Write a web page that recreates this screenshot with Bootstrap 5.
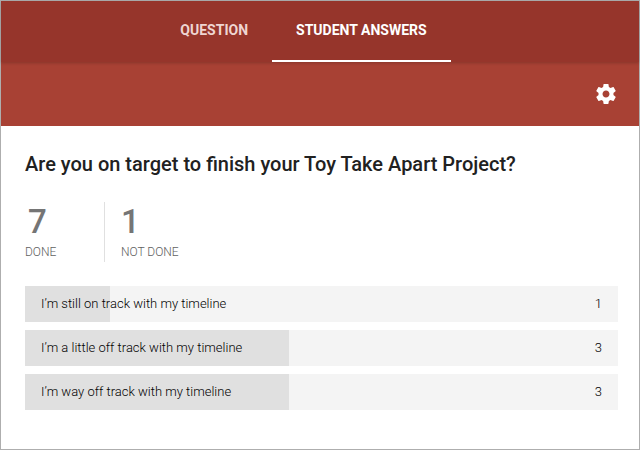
<!DOCTYPE html>
<html lang="en">
<head>
<meta charset="utf-8">
<meta name="viewport" content="width=device-width, initial-scale=1">
<title>Student answers</title>
<link href="https://cdn.jsdelivr.net/npm/bootstrap@5.3.0/dist/css/bootstrap.min.css" rel="stylesheet">
<style>
  body { font-family: Roboto, "Noto Sans", sans-serif; color: #212121; background: #fff; }
  .page-frame { border: 1px solid #aeaeae; }
  .tab-strip { background: #96352b; padding-right: 33px; box-shadow: 0 1px 3px rgba(0, 0, 0, .2); z-index: 1; }
  .tab-strip .nav-link { height: 61px; padding: 0 24px; border-bottom: 2px solid transparent; color: #efd5d2; font-size: 14px; line-height: 59px; font-weight: 700; }
  .tab-strip .nav-link.active { color: #fff; border-bottom-color: #fff; }
  .toolbar { background: #a84134; height: 64px; padding: 0 21px; }
  .question-body { padding: 24px 21px 24px 24px; }
  .question-title { font-size: 20px; line-height: 28px; font-weight: 500; margin-bottom: 24px; }
  .stat { height: 60px; color: #757575; }
  .stat-done { width: 80px; border-right: 1px solid #e0e0e0; }
  .stat-open { padding-left: 16px; }
  .stat-number { font-size: 33px; line-height: 40px; font-weight: 500; }
  .stat-done .stat-number { padding-left: 3px; }
  .stat-label { font-size: 12px; line-height: 20px; font-weight: 300; color: #616161; }
  .answers { margin-top: 24px; gap: 8px; font-size: 13px; line-height: 36px; font-weight: 300; color: #000; }
  .answer { height: 36px; padding: 0 16px; background: #f4f4f4; }
  .answer-fill { background: #e0e0e0; }
</style>
<script defer src="https://cdn.jsdelivr.net/npm/bootstrap@5.3.0/dist/js/bootstrap.bundle.min.js"></script>
</head>
<body>
<div class="page-frame min-vh-100">
  <header>
    <nav class="tab-strip nav justify-content-center position-relative" aria-label="Question views">
      <a class="nav-link" href="#question">QUESTION</a>
      <a class="nav-link active" href="#answers" aria-current="page">STUDENT ANSWERS</a>
    </nav>
    <div class="toolbar d-flex align-items-center justify-content-end">
      <button type="button" class="btn p-0 border-0 d-flex" aria-label="Settings">
        <svg width="24" height="24" viewBox="0 0 24 24" fill="#fff" aria-hidden="true"><path d="M19.43 12.98c.04-.32.07-.64.07-.98s-.03-.66-.07-.98l2.11-1.65c.19-.15.24-.42.12-.64l-2-3.46c-.12-.22-.39-.3-.61-.22l-2.49 1c-.52-.4-1.08-.73-1.69-.98l-.38-2.65C14.46 2.18 14.25 2 14 2h-4c-.25 0-.46.18-.49.42l-.38 2.65c-.61.25-1.17.59-1.69.98l-2.49-1c-.23-.09-.49 0-.61.22l-2 3.46c-.13.22-.07.49.12.64l2.11 1.65c-.04.32-.07.65-.07.98s.03.66.07.98l-2.11 1.65c-.19.15-.24.42-.12.64l2 3.46c.12.22.39.3.61.22l2.49-1c.52.4 1.08.73 1.69.98l.38 2.65c.03.24.24.42.49.42h4c.25 0 .46-.18.49-.42l.38-2.65c.61-.25 1.17-.59 1.69-.98l2.49 1c.23.09.49 0 .61-.22l2-3.46c.12-.22.07-.49-.12-.64l-2.11-1.65zM12 15.5c-1.93 0-3.5-1.57-3.5-3.5s1.57-3.5 3.5-3.5 3.5 1.57 3.5 3.5-1.57 3.5-3.5 3.5z"/></svg>
      </button>
    </div>
  </header>
  <main class="question-body" id="answers">
    <h1 class="question-title">Are you on target to finish your Toy Take Apart Project?</h1>
    <div class="d-flex">
      <div class="stat stat-done"><div class="stat-number">7</div><div class="stat-label">DONE</div></div>
      <div class="stat stat-open"><div class="stat-number">1</div><div class="stat-label">NOT DONE</div></div>
    </div>
    <ul class="answers list-unstyled d-flex flex-column mb-0">
      <li class="answer position-relative d-flex justify-content-between">
        <div class="answer-fill position-absolute top-0 start-0 h-100" style="width: 14.3%"></div>
        <span class="position-relative">I’m still on track with my timeline</span><span class="position-relative">1</span>
      </li>
      <li class="answer position-relative d-flex justify-content-between">
        <div class="answer-fill position-absolute top-0 start-0 h-100" style="width: 44.5%"></div>
        <span class="position-relative">I’m a little off track with my timeline</span><span class="position-relative">3</span>
      </li>
      <li class="answer position-relative d-flex justify-content-between">
        <div class="answer-fill position-absolute top-0 start-0 h-100" style="width: 44.5%"></div>
        <span class="position-relative">I’m way off track with my timeline</span><span class="position-relative">3</span>
      </li>
    </ul>
  </main>
</div>
</body>
</html>
